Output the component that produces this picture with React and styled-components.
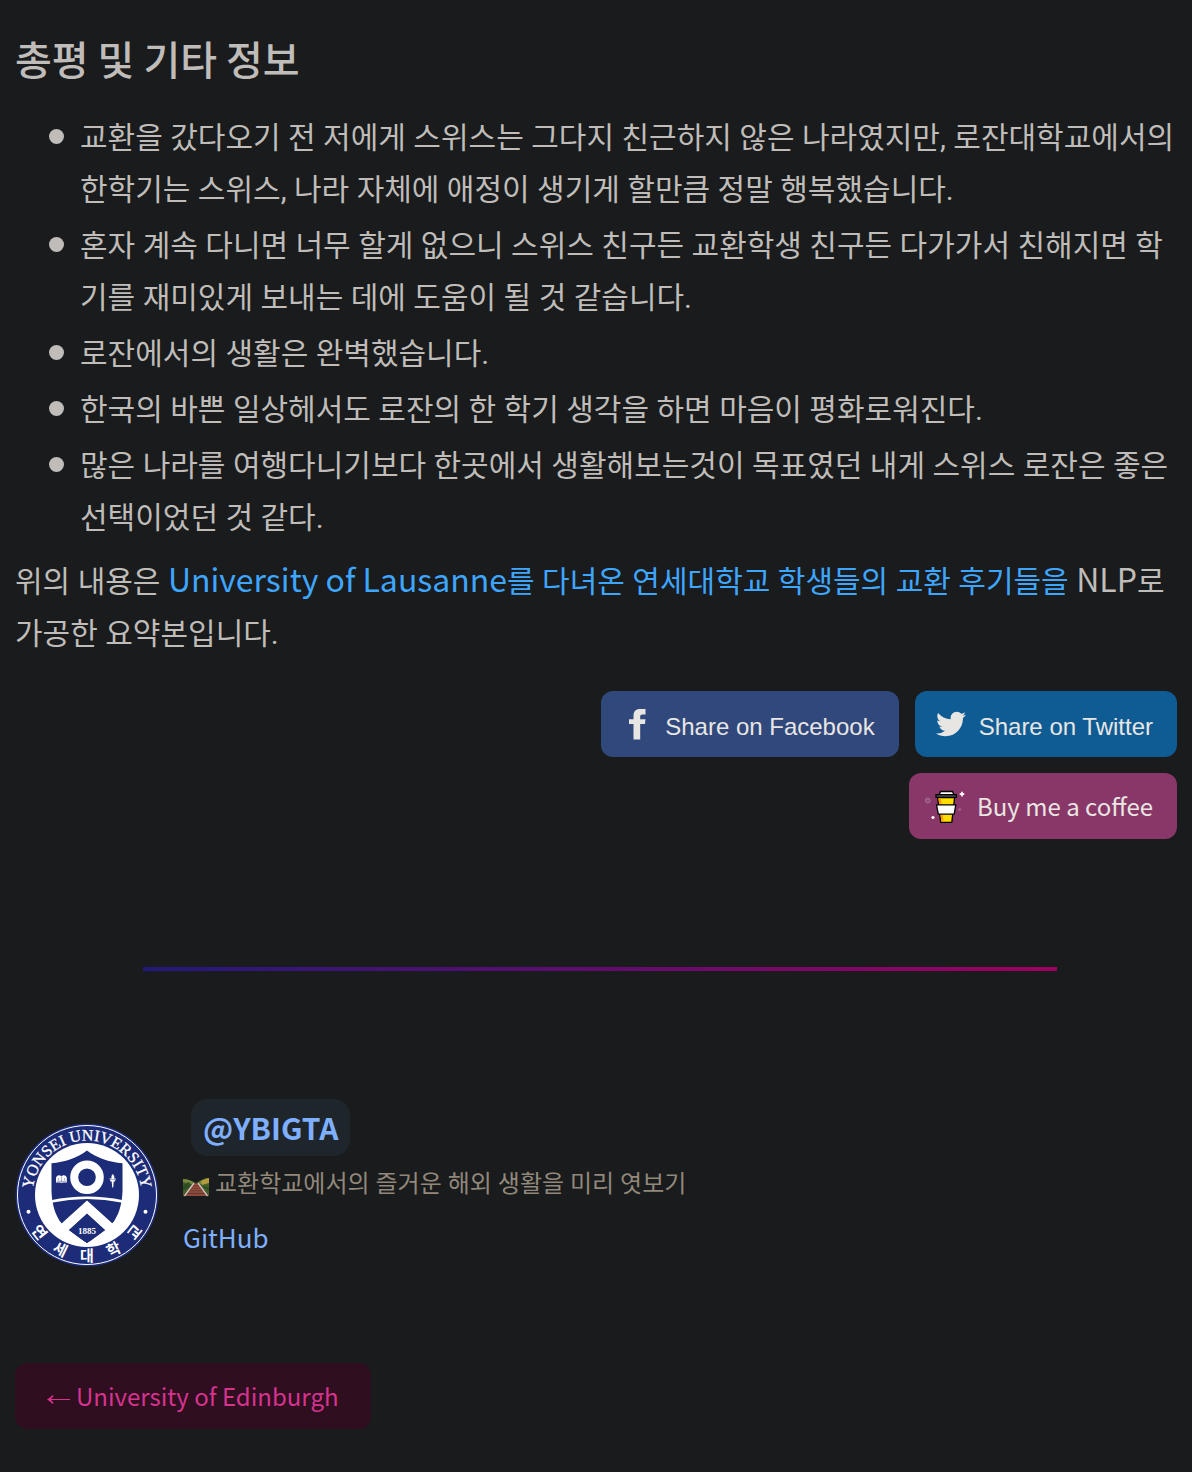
import React from "react";
import styled, { createGlobalStyle } from "styled-components";
import { FaTwitter } from "react-icons/fa";

const sans = `"Noto Sans CJK KR", "Noto Sans", sans-serif`;
const prose = `Roboto, "Noto Sans CJK KR", sans-serif`;
const helvetica = `"Liberation Sans", Arial, sans-serif`;

const GlobalStyle = createGlobalStyle`
  * { box-sizing: border-box; }
  html { background: #191b1c; }
  body {
    margin: 0;
    background: #191b1c;
    color: #bfbcb9;
    font-family: ${prose};
    font-size: 30px;
    line-height: 52px;
    word-break: break-all;
  }
  a { text-decoration: none; }
`;

const Page = styled.div`
  padding: 32px 15px 43px;
`;

const Title = styled.h2`
  margin: 0 0 27px;
  font-family: ${sans};
  font-size: 40px;
  font-weight: 500;
  line-height: 53px;
`;

const List = styled.ul`
  display: flex;
  flex-direction: column;
  gap: 4px;
  margin: 0 0 12px;
  padding: 0 0 0 34px;
  list-style: none;
`;

const Item = styled.li`
  display: flex;
  gap: 16px;

  &::before {
    content: "";
    flex: none;
    width: 15px;
    height: 15px;
    margin-top: 17px;
    border-radius: 50%;
    background: currentColor;
  }
`;

const Summary = styled.p`
  margin: 0;
`;

const Latin = styled.span`
  font-family: ${sans};
  font-size: 32px;
  line-height: 32px;
`;

const TextLink = styled.a`
  color: #3ea6ff;
`;

const Actions = styled.div`
  display: flex;
  flex-wrap: wrap;
  justify-content: flex-end;
  gap: 16px;
  margin: 31px 0 0 480px;
`;

const ActionLink = styled.a`
  display: flex;
  align-items: center;
  gap: 12px;
  height: 66px;
  padding: 0 24px 0 ${(p) => (p.$wide ? 14 : 20)}px;
  border-radius: 12px;
  background: ${(p) => p.$tone};
  color: #e8e6e3;
  font-family: ${(p) => p.$font};
  font-size: 24px;
  line-height: 32px;
  white-space: nowrap;
`;

const IconSlot = styled.span`
  display: flex;
  justify-content: center;
  width: ${(p) => p.$width}px;
`;

const ActionLabel = styled.span`
  padding-top: ${(p) => (p.$lowered ? 6 : 0)}px;
`;

const Divider = styled.hr`
  height: 4px;
  margin: 128px 120px 128px 128px;
  border: 0;
  background: linear-gradient(to right, #22197c, #a00060);
`;

const Author = styled.section`
  display: flex;
  align-items: flex-start;
  gap: 24px;
`;

const Seal = styled.svg`
  flex: none;
  display: block;
  width: 144px;
  height: 144px;
  margin-top: 24px;
`;

const AuthorInfo = styled.div`
  display: flex;
  flex-direction: column;
  align-items: flex-start;
`;

const AuthorName = styled.a`
  margin-left: 8px;
  padding: 0 12px;
  border-radius: 16px;
  background: #1e252b;
  color: #7fafff;
  font-family: ${sans};
  font-size: 30px;
  font-weight: 700;
  line-height: 57px;
`;

const Bio = styled.p`
  display: flex;
  align-items: center;
  gap: 6px;
  margin: 7px 0 10px;
  color: #91887b;
  font-size: 24px;
  line-height: 42px;
`;

const AuthorLink = styled.a`
  color: #7fafff;
  font-family: ${sans};
  font-size: 26px;
  line-height: 44px;
`;

const Pager = styled.nav`
  display: flex;
  margin-top: 96px;
`;

const PagerLink = styled.a`
  display: flex;
  align-items: center;
  gap: 6px;
  height: 66px;
  padding: 0 32px;
  border-radius: 12px;
  background: #2f0e20;
  color: #d6338f;
  font-family: ${sans};
  font-size: 24px;
  line-height: 40px;
`;

const reviews = [
  "교환을 갔다오기 전 저에게 스위스는 그다지 친근하지 않은 나라였지만, 로잔대학교에서의 한학기는 스위스, 나라 자체에 애정이 생기게 할만큼 정말 행복했습니다.",
  "혼자 계속 다니면 너무 할게 없으니 스위스 친구든 교환학생 친구든 다가가서 친해지면 학기를 재미있게 보내는 데에 도움이 될 것 같습니다.",
  "로잔에서의 생활은 완벽했습니다.",
  "한국의 바쁜 일상헤서도 로잔의 한 학기 생각을 하면 마음이 평화로워진다.",
  "많은 나라를 여행다니기보다 한곳에서 생활해보는것이 목표였던 내게 스위스 로잔은 좋은 선택이었던 것 같다.",
];

const sealSyllables = [
  ["연", 52],
  ["세", 26],
  ["대", 0],
  ["학", -26],
  ["교", -52],
];

function UniversitySeal() {
  return (
    <Seal viewBox="0 0 144 144" role="img" aria-label="Yonsei University">
      <defs>
        <path id="seal-arc" d="M18.7 84 A54.6 54.6 0 1 1 125.3 84" />
      </defs>
      <circle cx="72" cy="72" r="71.5" fill="#1d2c78" />
      <circle cx="72" cy="72" r="69.5" fill="none" stroke="#fff" strokeWidth="1" />
      <circle cx="72" cy="72" r="52" fill="#fff" />
      <text
        fill="#fff"
        stroke="#fff"
        strokeWidth="0.3"
        fontFamily="Liberation Serif, serif"
        fontSize="16"
        textAnchor="middle"
      >
        <textPath href="#seal-arc" startOffset="50%">YONSEI UNIVERSITY</textPath>
      </text>
      {sealSyllables.map(([ch, angle]) => (
        <text
          key={ch}
          x="72"
          y="138"
          fill="#fff"
          fontFamily="Noto Sans CJK KR, sans-serif"
          fontSize="15"
          fontWeight="700"
          textAnchor="middle"
          transform={`rotate(${angle} 72 72)`}
        >
          {ch}
        </text>
      ))}
      <circle cx="13.5" cy="88.7" r="2" fill="#fff" />
      <circle cx="130.5" cy="88.7" r="2" fill="#fff" />
      <path
        d="M72 27.5 C62 35 50 39 36.5 40.3 V68 C37.3 90 45 107 72 120 C99 107 106.7 90 107.5 68 V40.3 C94 39 82 35 72 27.5Z"
        fill="#1d2c78"
      />
      <path d="M36 78.5 Q72 71 108 78.5" fill="none" stroke="#fff" strokeWidth="2.6" />
      <path d="M72 77.6 L46 101 L53.6 107.5 L72 90.6 L90.4 107.5 L98 101Z" fill="#fff" />
      <path d="M44 98 L54.5 107.5 L72 120.5 L89.5 107.5 L100 98 L98 116 L72 124 L46 116Z" fill="#fff" />
      <path d="M72 91 L90 107 L72 120 L54 107Z" fill="#1d2c78" />
      <circle cx="72" cy="54.3" r="12.8" fill="none" stroke="#fff" strokeWidth="8" />
      <path
        d="M41 59.5 V54.5 Q42 52.3 44 52.3 Q45.6 52.3 46.4 53.4 Q47.2 52.3 48.8 52.3 Q51 52.3 51.8 54.5 V59.5 H47.5 L46.4 60.3 L45.3 59.5Z"
        fill="#fff"
      />
      <path d="M43.4 55 V57.5 M46.4 54 V59.5 M49.4 55 V57.5 M42 58.3 H51" fill="none" stroke="#1d2c78" strokeWidth="0.4" />
      <path d="M97.7 51 Q100.3 53.3 98.9 55.6 H101 L99.8 58.4 H98.7 L98.2 64.5 H97.2 L96.7 58.4 H95.6 L94.4 55.6 H96.5 Q95.4 53.3 97.7 51Z" fill="#fff" />
      <path d="M94.6 56.6 H100.8" stroke="#1d2c78" strokeWidth="0.4" />
      <text x="72" y="110.5" fill="#fff" fontFamily="Liberation Serif, serif" fontSize="9" fontWeight="700" textAnchor="middle">
        1885
      </text>
    </Seal>
  );
}

function FacebookMark() {
  return (
    <svg width="18" height="32" viewBox="-1 -1 18 32" fill="currentColor" aria-hidden="true">
      <path d="M4.5 30.5 V15 H0 V10.2 H4.5 V7 C4.5 2.5 6.8 0 11 0 H16.5 V5.5 H13.5 C11.8 5.5 11.2 6.3 11.2 7.8 V10.2 H16.5 L16 15 H11.2 V30.5Z" />
    </svg>
  );
}

function CoffeeCup() {
  return (
    <svg width="42" height="36" viewBox="-1 -1 42 36" aria-hidden="true">
      <circle cx="3.8" cy="11.5" r="2" fill="none" stroke="#a35f8b" strokeWidth="1.8" />
      <circle cx="35.7" cy="20.5" r="1.5" fill="#a35f8b" />
      <path d="M38 2.8 V7.4 M35.7 5.1 H40.3" stroke="#fff" strokeWidth="1.7" />
      <path d="M9 26.9 V30.1 M7.4 28.5 H10.6" stroke="#fff" strokeWidth="1.5" />
      <path d="M13.6 8.5 H30.6 L27.8 33.4 H16.7Z" fill="#ffdd00" stroke="#000" strokeWidth="1.3" />
      <path d="M14.6 9.5 H17 L19.5 32.6 H17.4Z" fill="#ff9d00" />
      <path d="M12.5 15.9 H31.8 L30.2 25.2 H14.3Z" fill="#fff" stroke="#000" strokeWidth="1.3" />
      <path d="M15.3 5.6 L16.5 2.5 H28.5 L29.8 5.6Z" fill="#fff" stroke="#000" strokeWidth="1.3" />
      <path d="M12 5.6 H32.4 V8.3 H12Z" fill="#505050" stroke="#000" strokeWidth="1.2" />
    </svg>
  );
}

function RailwayTrack() {
  return (
    <svg width="26" height="26" viewBox="0 -7 26 26" aria-hidden="true">
      <path d="M0 1 L9 3 L13 5 L18 2 L26 0 V18 H0Z" fill="#42602a" />
      <path d="M0 1 Q7 1 11 5 H16 Q20 0 26 0 V3 L18 6 H9 L0 4Z" fill="#76893c" />
      <path d="M18 3 L26 0 V5 L19 7Z" fill="#b69b3f" />
      <path d="M0 7 L6 4 L8 8 L0 13Z M20 7 L26 10 V13 L21 9Z" fill="#2f4e22" />
      <path d="M10 5 H16 L26 18 H0Z" fill="#5e3a30" />
      <path d="M10 6.5 H16 M9 9 H17 M7.5 11.5 H18.5 M5.5 14 H20.5 M3.5 17 H22.5" stroke="#a04f3c" strokeWidth="1.4" />
      <path d="M11 5 L1.5 18 M15 5 L24.5 18" stroke="#d6c9c0" strokeWidth="1.3" />
    </svg>
  );
}

function BackArrow() {
  return (
    <svg width="23" height="20" viewBox="0 0 23 20" fill="none" stroke="currentColor" aria-hidden="true">
      <path d="M1.5 13.5 H23" strokeWidth="1" />
      <path d="M6 9.5 Q4.5 12 1.5 13.5 Q4.5 15 6 17.5" strokeWidth="1.5" />
    </svg>
  );
}

export default function App() {
  return (
    <>
      <GlobalStyle />
      <Page>
        <main>
          <Title>총평 및 기타 정보</Title>
          <List>
            {reviews.map((text) => (
              <Item key={text}>{text}</Item>
            ))}
          </List>
          <Summary>
            위의 내용은{" "}
            <TextLink href="#reviews">
              <Latin>University of Lausanne</Latin>를 다녀온 연세대학교 학생들의 교환 후기들을
            </TextLink>{" "}
            <Latin>NLP</Latin>로 가공한 요약본입니다.
          </Summary>
          <Actions>
            <ActionLink href="#facebook" $tone="#30487b" $font={helvetica}>
              <IconSlot $width={32}>
                <FacebookMark />
              </IconSlot>
              <ActionLabel $lowered>Share on Facebook</ActionLabel>
            </ActionLink>
            <ActionLink href="#twitter" $tone="#0f5c94" $font={helvetica}>
              <IconSlot $width={32}>
                <FaTwitter size={30} aria-hidden="true" />
              </IconSlot>
              <ActionLabel $lowered>Share on Twitter</ActionLabel>
            </ActionLink>
            <ActionLink href="#coffee" $tone="#893768" $font={sans} $wide>
              <IconSlot $width={42}>
                <CoffeeCup />
              </IconSlot>
              <ActionLabel>Buy me a coffee</ActionLabel>
            </ActionLink>
          </Actions>
        </main>
        <Divider />
        <Author>
          <UniversitySeal />
          <AuthorInfo>
            <AuthorName href="#ybigta">@YBIGTA</AuthorName>
            <Bio>
              <RailwayTrack />
              교환학교에서의 즐거운 해외 생활을 미리 엿보기
            </Bio>
            <AuthorLink href="#github">GitHub</AuthorLink>
          </AuthorInfo>
        </Author>
        <Pager aria-label="Pagination">
          <PagerLink href="#edinburgh">
            <BackArrow />
            University of Edinburgh
          </PagerLink>
        </Pager>
      </Page>
    </>
  );
}
